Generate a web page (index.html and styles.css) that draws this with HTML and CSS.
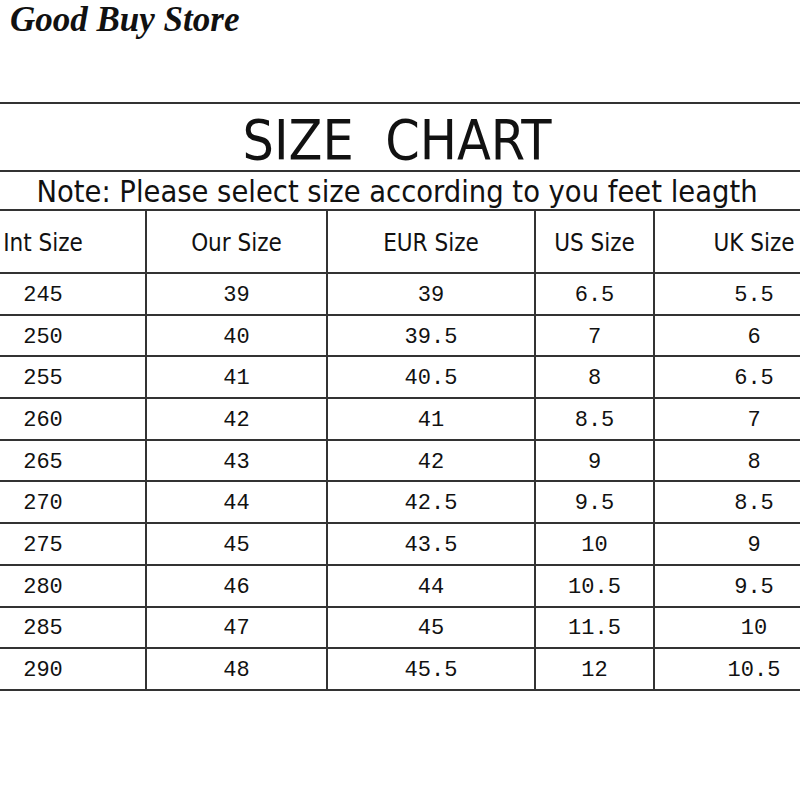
FILE: index.html
```html
<!DOCTYPE html>
<html>
<head>
<meta charset="utf-8">
<link rel="stylesheet" href="styles.css">
</head>
<body>
<div class="page">
  <div class="logo">Good Buy Store</div>
  <div class="chart">
    <div class="title">SIZE&nbsp; CHART</div>
    <div class="note">Note: Please select size according to you feet leagth</div>
    <div class="grid">
      <div class="cell head c1">Int Size</div>
      <div class="cell head">Our Size</div>
      <div class="cell head">EUR Size</div>
      <div class="cell head">US Size</div>
      <div class="cell head">UK Size</div>

      <div class="cell c1">245</div><div class="cell">39</div><div class="cell">39</div><div class="cell">6.5</div><div class="cell">5.5</div>
      <div class="cell c1">250</div><div class="cell">40</div><div class="cell">39.5</div><div class="cell">7</div><div class="cell">6</div>
      <div class="cell c1">255</div><div class="cell">41</div><div class="cell">40.5</div><div class="cell">8</div><div class="cell">6.5</div>
      <div class="cell c1">260</div><div class="cell">42</div><div class="cell">41</div><div class="cell">8.5</div><div class="cell">7</div>
      <div class="cell c1">265</div><div class="cell">43</div><div class="cell">42</div><div class="cell">9</div><div class="cell">8</div>
      <div class="cell c1">270</div><div class="cell">44</div><div class="cell">42.5</div><div class="cell">9.5</div><div class="cell">8.5</div>
      <div class="cell c1">275</div><div class="cell">45</div><div class="cell">43.5</div><div class="cell">10</div><div class="cell">9</div>
      <div class="cell c1">280</div><div class="cell">46</div><div class="cell">44</div><div class="cell">10.5</div><div class="cell">9.5</div>
      <div class="cell c1">285</div><div class="cell">47</div><div class="cell">45</div><div class="cell">11.5</div><div class="cell">10</div>
      <div class="cell c1">290</div><div class="cell">48</div><div class="cell">45.5</div><div class="cell">12</div><div class="cell">10.5</div>
    </div>
  </div>
</div>
</body>
</html>
```

FILE: styles.css
```css
html, body {
  margin: 0;
  padding: 0;
  background: #fff;
}
.page {
  width: 800px;
  height: 800px;
  overflow: hidden;
  color: #111;
}
.logo {
  font-family: "Liberation Serif", serif;
  font-style: italic;
  font-weight: bold;
  font-size: 35px;
  line-height: 40px;
  padding-left: 10px;
  height: 102px;
  box-sizing: border-box;
}
.chart {
  width: 912px;
  margin-left: -59px;
  border-top: 2px solid #333;
  font-family: "DejaVu Sans Condensed", "DejaVu Sans", sans-serif;
}
.title {
  height: 66px;
  border-bottom: 2px solid #333;
  text-align: center;
  font-size: 55px;
  line-height: 72px;
}
.note {
  height: 37px;
  border-bottom: 2px solid #333;
  text-align: center;
  font-size: 30.5px;
  line-height: 40px;
  white-space: nowrap;
}
.grid {
  display: grid;
  grid-template-columns: 204px 181px 208px 119px 200px;
  grid-template-rows: 63px repeat(10, 41.7px);
}
.cell {
  box-sizing: border-box;
  border-bottom: 2px solid #333;
  border-left: 2px solid #333;
  display: flex;
  align-items: center;
  justify-content: center;
  font-family: "Liberation Mono", monospace;
  font-size: 22px;
  padding-top: 3px;
}
.cell.c1 {
  border-left: none;
}
.cell.head {
  font-family: "DejaVu Sans Condensed", "DejaVu Sans", sans-serif;
  font-size: 24px;
  padding-top: 2px;
}
```
